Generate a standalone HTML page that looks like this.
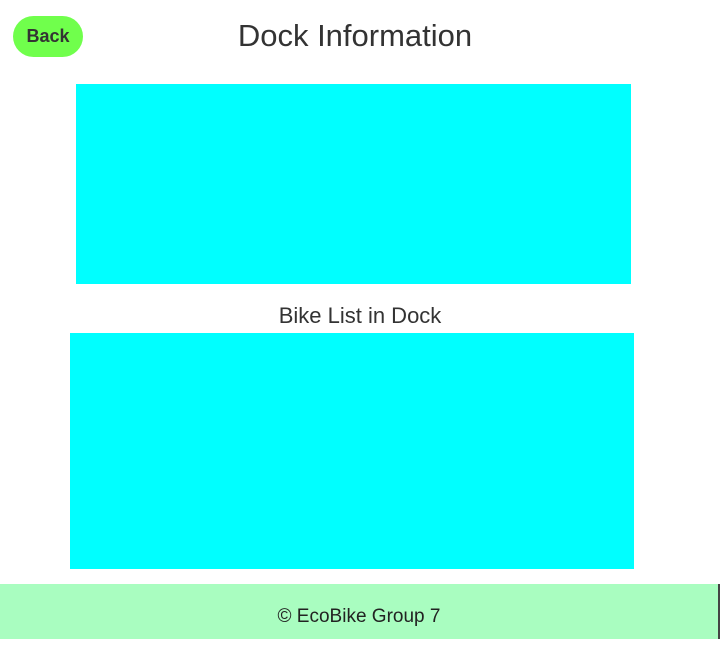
<!DOCTYPE html>
<html><head><style>
body{margin:0;width:720px;height:639px;position:relative;background:#fff;font-family:"Liberation Sans",sans-serif;color:#333;overflow:hidden}
.btn{position:absolute;left:13px;top:16px;width:70px;height:41px;border-radius:21px;background:#70ff4c;font-weight:bold;font-size:18px;line-height:41px;text-align:center;color:#333}
h1{position:absolute;left:0;width:710px;top:17px;margin:0;font-weight:normal;font-size:31px;text-align:center;line-height:38px}
.b1{position:absolute;left:76px;top:84px;width:555px;height:200px;background:#0ff}
.t2{position:absolute;left:0;width:720px;top:302px;text-align:center;font-size:22px;line-height:28px}
.b2{position:absolute;left:70px;top:333px;width:564px;height:236px;background:#0ff}
.f{position:absolute;left:0;top:584px;width:718px;height:55px;background:#a9fdc0;text-align:center;font-size:19px;line-height:66px;color:#222;border-right:2px solid #444}
</style></head><body>
<div class="btn">Back</div>
<h1>Dock Information</h1>
<div class="b1"></div>
<div class="t2">Bike List in Dock</div>
<div class="b2"></div>
<div class="f">© EcoBike Group 7</div>
</body></html>
